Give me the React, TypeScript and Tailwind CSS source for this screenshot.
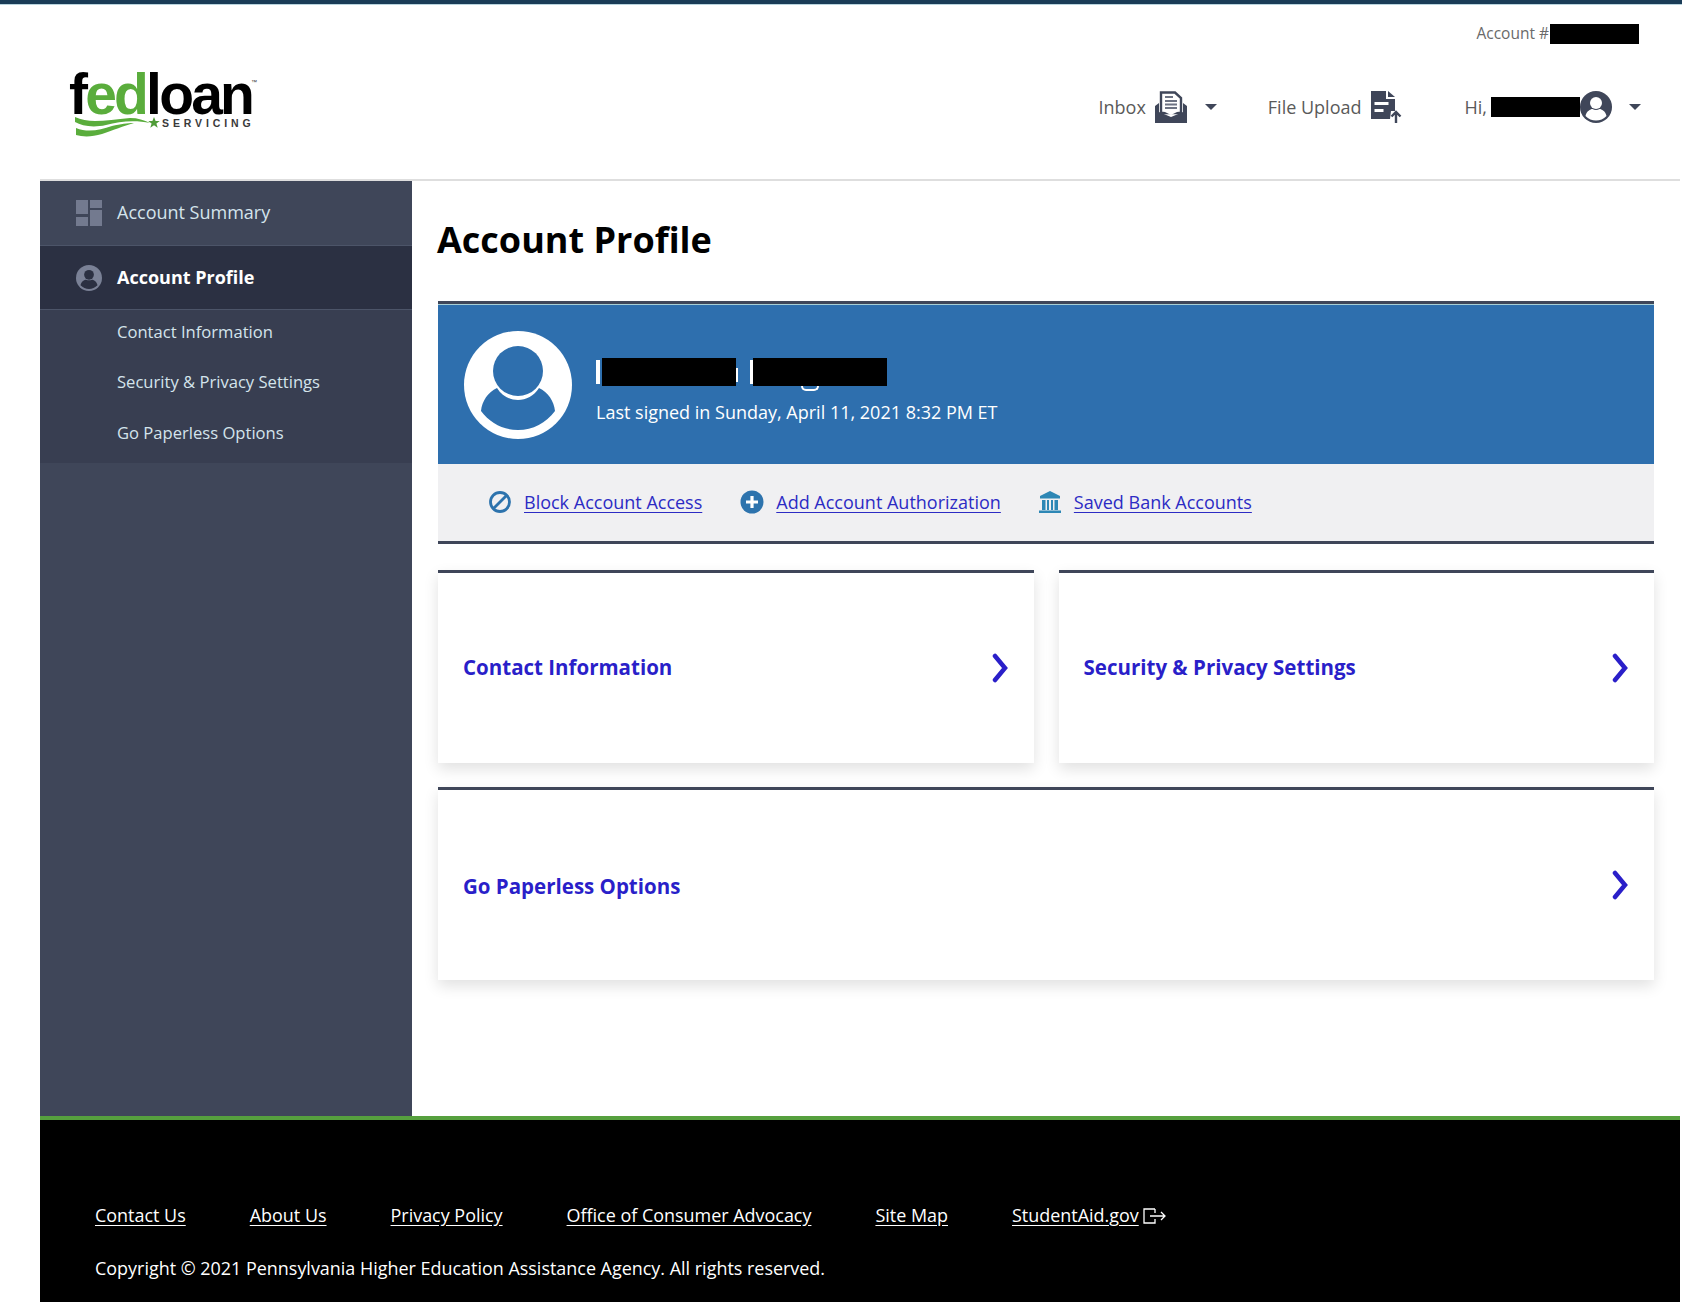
import React from "react";

const font = { fontFamily: '"Open Sans", "Noto Sans", sans-serif' };

function Logo() {
  return (
    <div className="relative w-[190px] h-[72px]">
      <div className="flex items-baseline leading-[46px] h-[46px] font-bold text-black tracking-[-2.800px] text-[57px]" style={{ fontFamily: '"Liberation Sans", sans-serif' }}>
        <span>f</span><span className="text-[#5aad3c]">ed</span><span>loan</span>
      </div>
      <div className="absolute left-[182px] top-[8px] text-[6px] leading-none text-[#333]" style={{ fontFamily: '"Liberation Sans", sans-serif' }}>™</div>
      <div className="absolute left-[93px] top-[47px] text-[10.500px] leading-none font-bold tracking-[3.900px] text-[#3a3a3a]" style={{ fontFamily: '"Liberation Sans", sans-serif' }}>SERVICING</div>
      <svg className="absolute left-[4px] top-[45px]" width="90" height="24" viewBox="0 0 90 24">
        <path d="M2 1c14 7 32 3 55 1 8 0 14 2 20 5-14-3-30-2-44 2C20 12 9 10 2 6z" fill="#5aad3c" />
        <path d="M3 12c12 5 24 2 36-2 9-2 15-3 22-3-11 3-20 7-32 11-10 3-19 3-26 1z" fill="#5aad3c" />
        <path d="M81 1l1.600 4h4.200l-3.400 2.600 1.300 4.200-3.700-2.600-3.700 2.600 1.300-4.200L75.200 5h4.200z" fill="#4f9c38" />
      </svg>
    </div>
  );
}

function Caret() {
  return <span className="block w-0 h-0 border-x-[6px] border-x-transparent border-t-[6px] border-t-[#3f4659]" />;
}

function InboxIcon() {
  return (
    <svg width="32" height="32" viewBox="0 0 32 32" fill="none">
      <path d="M6 1.500h14l6 5.500v15H6z" fill="#fff" stroke="#3f4659" strokeWidth="2.400" />
      <path d="M10 6h8M10 10h12M10 13.500h12M10 17h12" stroke="#6d7383" strokeWidth="2" />
      <path d="M0 15l4-3v9l12 5 12-5v-9l4 3v17H0z" fill="#3f4659" />
      <path d="M8 20h16l-8 4z" fill="#fff" />
    </svg>
  );
}

function UploadIcon() {
  return (
    <svg width="32" height="32" viewBox="0 0 32 32" fill="none">
      <path d="M0 0h15v8h9v12l-4 0-1 8H0z" fill="#3f4659" />
      <path d="M17 0l7 6h-7z" fill="#3f4659" />
      <path d="M3.500 11h14v3h-14zM3.500 18h9v3h-9z" fill="#fff" />
      <path d="M25 21v11M20.500 25.500 25 21l4.500 4.500" stroke="#3f4659" strokeWidth="2.400" />
    </svg>
  );
}

function UserCircle({ size, color, inner }: { size: number; color: string; inner: string }) {
  return (
    <svg width={size} height={size} viewBox="0 0 32 32">
      <circle cx="16" cy="16" r="16" fill={color} />
      <circle cx="16" cy="12" r="6" fill={inner} />
      <path d="M5.500 25c1-5 5-7 7-7 2 1.200 5 1.200 7 0 2 0 6 2 7 7-3 3-6.500 4.500-10.500 4.500S8.500 28 5.500 25z" fill={inner} />
    </svg>
  );
}

function Block({ className }: { className: string }) {
  return <span className={`inline-block bg-black ${className}`} />;
}

function Chevron() {
  return (
    <svg width="18" height="30" viewBox="0 0 18 30" fill="none">
      <path d="M4 3 14 15 4 27" stroke="#2a1fc9" strokeWidth="4.500" strokeLinecap="round" strokeLinejoin="miter" />
    </svg>
  );
}

function Card({ label, className, labelClass }: { label: string; className: string; labelClass: string }) {
  return (
    <div className={`flex items-center justify-between border-t-[3px] border-[#3f4659] bg-white pl-[25px] pr-[25px] shadow-[0_6px_14px_rgba(0,0,0,0.12)] ${className}`}>
      <a className={`text-[20.500px] font-bold text-[#2a1fc9] leading-none ${labelClass}`}>{label}</a>
      <Chevron />
    </div>
  );
}

function SideSub({ label, className }: { label: string; className: string }) {
  return <div className={`pl-[77px] text-[16.600px] leading-none text-[#d4e4ec] ${className}`}>{label}</div>;
}

function ActionLink({ icon, label, className }: { icon: React.ReactNode; label: string; className: string }) {
  return (
    <div className={`flex items-center ${className}`}>
      <span className="w-[24px] h-[24px] flex items-center justify-center mr-[12px]">{icon}</span>
      <a className="text-[18px] leading-none text-[#2c2bc4] underline underline-offset-[3px]">{label}</a>
    </div>
  );
}

function FooterLink({ children }: { children: React.ReactNode }) {
  return <a className="text-[17.950px] leading-none text-white underline underline-offset-[3px]">{children}</a>;
}

export default function App() {
  return (
    <div className="w-[1682px] h-[1302px] bg-white flex flex-col overflow-hidden" style={font}>
      <div className="h-[5px] bg-[#1a3c57] border-b border-[#b9d4de] shrink-0" />
      <header className="h-[176px] ml-[40px] mr-[2px] border-b-2 border-[#dedede] flex flex-col shrink-0">
        <div className="h-[44px] flex items-center justify-end pr-[41px] pt-[14px]">
          <span className="text-[15.500px] leading-none text-[#6a6a6a] mr-[1px] -mt-[1px]">Account #</span>
          <Block className="w-[89px] h-[20px]" />
        </div>
        <div className="flex items-start justify-between">
          <div className="ml-[29px] mt-[22px]"><Logo /></div>
          <div className="flex items-center h-[32px] mt-[42px] text-[18px] text-[#5a5a5a]">
            <span className="mr-[9px]">Inbox</span>
            <InboxIcon />
            <span className="ml-[18px]"><Caret /></span>
            <span className="ml-[51px] mr-[9px]">File Upload</span>
            <UploadIcon />
            <span className="ml-[62px] mr-[4px]">Hi,</span>
            <Block className="w-[89px] h-[20px]" />
            <UserCircle size={32} color="#3f4659" inner="#fff" />
            <span className="ml-[17px] mr-[39px]"><Caret /></span>
          </div>
        </div>
      </header>

      <div className="flex flex-1 ml-[40px] min-h-0">
        <aside className="w-[372px] shrink-0 bg-[#3f4659] flex flex-col">
          <div className="h-[65px] flex items-center pl-[36px] border-b border-[#4c5468]">
            <svg width="26" height="26" viewBox="0 0 26 26" className="mr-[15px]">
              <path d="M0 0h12v14H0zM14 0h12v8H14zM0 17h12v9H0zM14 10h12v16H14z" fill="#737a8f" />
            </svg>
            <span className="text-[18px] leading-none text-[#d4e4ec] -mt-[2px]">Account Summary</span>
          </div>
          <div className="h-[64px] flex items-center pl-[36px] bg-[#2b3042] border-b border-[#4c5468]">
            <span className="mr-[15px] flex"><UserCircle size={26} color="#7a8196" inner="#2b3042" /></span>
            <span className="text-[18px] leading-none font-bold text-white -mt-[2px]">Account Profile</span>
          </div>
          <div className="h-[153px] bg-[#383e51] flex flex-col pt-[14px]">
            <SideSub label="Contact Information" className="h-[50px]" />
            <SideSub label="Security & Privacy Settings" className="h-[51px]" />
            <SideSub label="Go Paperless Options" className="" />
          </div>
        </aside>

        <main className="flex-1 pl-[26px] pr-[28px] min-w-0">
          <h1 className="text-[36px] leading-none font-bold text-black mt-[41px] mb-[43px] -ml-[1px]">Account Profile</h1>
          <section className="border-t-[3px] border-[#3f4659]">
            <div className="h-[160px] bg-[#2e6fae] flex items-center pl-[26px] border-t border-[#a8cfd6]">
              <svg width="108" height="108" viewBox="0 0 108 108">
                <circle cx="54" cy="54" r="54" fill="#fff" />
                <circle cx="54" cy="40" r="25" fill="#2e6fae" />
                <path d="M17 80c1-10 7-19 16-23 5 8 13 12 21 12s16-4 21-12c9 4 15 13 16 23-9 12-22 19-37 19S26 92 17 80z" fill="#2e6fae" />
              </svg>
              <div className="ml-[24px] text-white mt-[7px]">
                <div className="h-[33px] flex items-center">
                  <span className="inline-block w-[4px] h-[24px] bg-white mr-[2px]" />
                  <Block className="w-[134px] h-[28px]" />
                  <span className="inline-block w-[2px] h-[14px] bg-white mr-[12px] mt-[6px]" />
                  <span className="inline-block w-[3px] h-[24px] bg-white" />
                  <span className="relative inline-flex">
                    <Block className="w-[134px] h-[28px]" />
                    <span className="absolute left-[48px] top-[28px] w-[18px] h-[5px] rounded-b-full border-b-2 border-x-2 border-white" />
                  </span>
                </div>
                <div className="text-[18px] leading-none mt-[15px]">Last signed in Sunday, April 11, 2021 8:32 PM ET</div>
              </div>
            </div>
            <div className="h-[80px] bg-[#f0f0f2] border-b-[3px] border-[#3f4659] flex items-center pl-[50px] pb-[2px]">
              <ActionLink
                className="mr-[38px]"
                label="Block Account Access"
                icon={
                  <svg width="24" height="24" viewBox="0 0 24 24" fill="none">
                    <circle cx="12" cy="12" r="9.500" stroke="#2d73ad" strokeWidth="2.800" />
                    <path d="M5.500 18.500 18.500 5.500" stroke="#2d73ad" strokeWidth="2.800" />
                  </svg>
                }
              />
              <ActionLink
                className="mr-[37px]"
                label="Add Account Authorization"
                icon={
                  <svg width="24" height="24" viewBox="0 0 24 24">
                    <circle cx="12" cy="12" r="11.500" fill="#2d73ad" />
                    <path d="M12 6v12M6 12h12" stroke="#fff" strokeWidth="3.200" />
                  </svg>
                }
              />
              <ActionLink
                className=""
                label="Saved Bank Accounts"
                icon={
                  <svg width="24" height="24" viewBox="0 0 24 24">
                    <path d="M12 1 22 6v2.500H2V6z" fill="#2d87b5" />
                    <path d="M4 10h3.500v10H4zM9 10h2v10H9zM13 10h2v10h-2zM16.500 10H20v10h-3.500zM1 20.500h22V23H1z" fill="#2d87b5" />
                  </svg>
                }
              />
            </div>
          </section>
          <div className="flex gap-[25px] mt-[26px]">
            <Card label="Contact Information" labelClass="mb-[1px]" className="flex-1 h-[193px]" />
            <Card label="Security & Privacy Settings" labelClass="mb-[1px]" className="flex-1 h-[193px]" />
          </div>
          <Card label="Go Paperless Options" labelClass="mt-[2px]" className="h-[193px] mt-[24px]" />
        </main>
      </div>

      <footer className="ml-[40px] mr-[2px] h-[186px] shrink-0 bg-black border-t-[4px] border-[#56a03e] pl-[55px] pt-[84px]">
        <div className="flex items-center gap-[64px] h-[24px]">
          <FooterLink>Contact Us</FooterLink>
          <FooterLink>About Us</FooterLink>
          <FooterLink>Privacy Policy</FooterLink>
          <FooterLink>Office of Consumer Advocacy</FooterLink>
          <FooterLink>Site Map</FooterLink>
          <div className="flex items-center">
            <FooterLink>StudentAid.gov</FooterLink>
            <svg width="24" height="16" viewBox="0 0 24 16" fill="none" className="ml-[4px]">
              <path d="M12 1H1v14h11V11M12 5V1" stroke="#fff" strokeWidth="1.300" />
              <path d="M7 8h15M18 4l4 4-4 4" stroke="#fff" strokeWidth="1.300" />
            </svg>
          </div>
        </div>
        <div className="text-[17.950px] leading-none text-white mt-[32px]">Copyright © 2021 Pennsylvania Higher Education Assistance Agency. All rights reserved.</div>
      </footer>
    </div>
  );
}
